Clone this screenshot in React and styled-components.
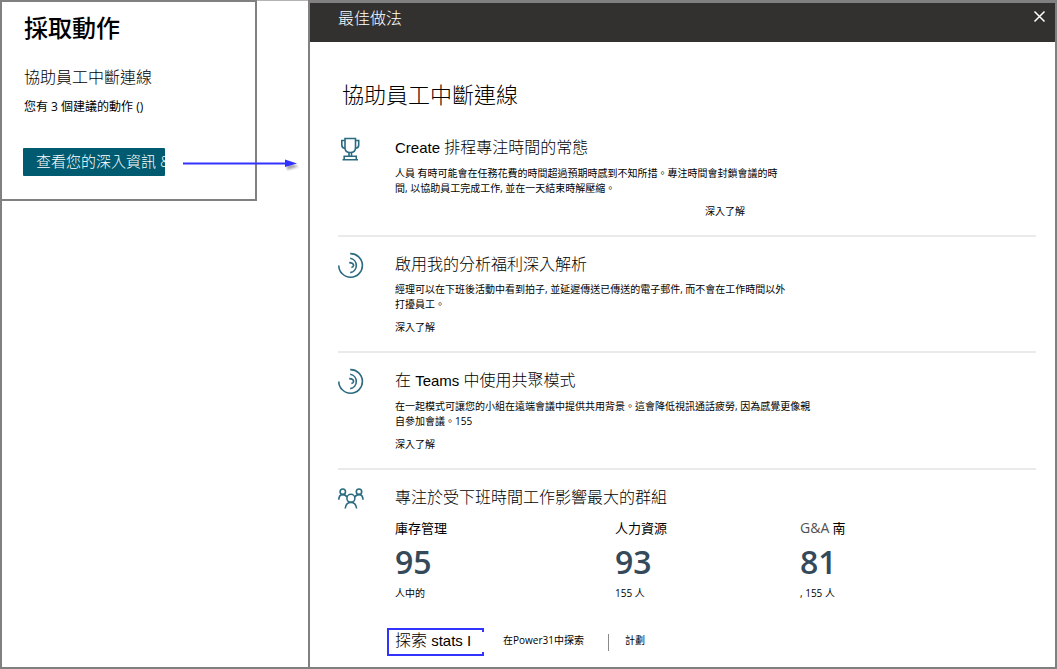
import React from 'react';
import styled, { createGlobalStyle } from 'styled-components';

const frame = '#808080';
const teal = '#2a6b80';
const blue = '#3333ff';

const GlobalStyle = createGlobalStyle`
  *, *::before, *::after { box-sizing: border-box; }
  body {
    margin: 0;
    background: #fff;
    color: #000;
    font-family: "Open Sans", "Noto Sans CJK TC", sans-serif;
  }
  h1, h2, h3, p { margin: 0; font-weight: 400; }
`;

const Page = styled.div`
  display: grid;
  grid-template-columns: minmax(308px, 29%) 1fr;
  min-height: 100vh;
`;

const Side = styled.aside`
  display: flex;
  align-items: flex-start;
  border-left: 2px solid ${frame};
  border-bottom: 2px solid ${frame};
`;

const SideEdge = styled.div`
  flex: 1;
  border-top: 1px solid #b4b4b4;
`;

const Card = styled.section`
  flex: 0 0 255px;
  min-width: 0;
  padding: 10px 0 23px 22px;
  border: 2px solid ${frame};
  border-left: 0;
`;

const CardTitle = styled.h1`
  font-size: 24px;
  line-height: 32px;
  font-weight: 500;
`;

const CardSubtitle = styled.h2`
  margin-top: 21px;
  font-size: 16px;
  line-height: 24px;
  font-weight: 300;
`;

const CardNote = styled.p`
  margin-top: 8px;
  font-size: 12px;
  line-height: 20px;
`;

const ActionRow = styled.div`
  display: flex;
  align-items: center;
  gap: 18px;
  margin: 31px 0 0 -1px;
`;

const InsightsButton = styled.button`
  flex: 0 0 142px;
  height: 28px;
  padding: 0 0 2px 13px;
  overflow: hidden;
  border: 0;
  border-radius: 1px;
  background: #005b70;
  color: #fff;
  font: 300 15px/24px "Open Sans", "Noto Sans CJK TC", sans-serif;
  text-align: left;
  white-space: nowrap;
`;

const Arrow = styled.svg`
  flex: none;
  display: block;
`;

const Panel = styled.main`
  display: flex;
  flex-direction: column;
  border: 2px solid ${frame};
  border-top-width: 3px;
`;

const PanelHeader = styled.header`
  display: flex;
  justify-content: space-between;
  align-items: flex-start;
  height: 39px;
  padding: 3px 9px 0 28px;
  background: #33312f;
  color: #fff;
`;

const PanelTitle = styled.h2`
  font-size: 16px;
  line-height: 24px;
  font-weight: 300;
`;

const CloseButton = styled.button`
  display: flex;
  padding: 4px 0;
  border: 0;
  background: none;
  color: #fff;
`;

const Content = styled.div`
  padding: 36px 19px 11px 28px;
`;

const Heading = styled.h1`
  padding-left: 4px;
  font-size: 22px;
  line-height: 32px;
  font-weight: 300;
  margin-bottom: 10px;
`;

const Practice = styled.section`
  display: grid;
  grid-template-columns: 26px 1fr;
  column-gap: 31px;
  padding: 15px 0 ${(p) => (p.$last ? 0 : 16)}px;
  border-bottom: ${(p) => (p.$last ? '0' : '2px solid #eaeaea')};
`;

const PracticeTitle = styled.h3`
  font-size: 16px;
  line-height: 24px;
  font-weight: 300;
`;

const Latin = styled.span`
  font-family: "Liberation Sans", sans-serif;
  font-size: 15px;
  font-weight: 400;
`;

const Description = styled.p`
  margin-top: 6px;
  font-family: "Open Sans", "Noto Sans CJK JP", sans-serif;
  font-size: 10px;
  line-height: 15px;
  white-space: nowrap;
`;

const LearnMore = styled.a`
  display: block;
  margin-top: 8px;
  padding-left: ${(p) => (p.$indented ? 310 : 0)}px;
  color: inherit;
  font-size: 10px;
  line-height: 15px;
  text-decoration: none;
`;

const Stats = styled.div`
  display: grid;
  grid-template-columns: 220px 185px 1fr;
  margin-top: 9px;
`;

const StatLabel = styled.p`
  font-size: 13px;
  line-height: 20px;
`;

const Muted = styled.span`
  color: #505050;
  font-size: 14px;
`;

const StatValue = styled.p`
  margin-top: 4px;
  color: #34495a;
  font-size: 32px;
  line-height: 40px;
  font-weight: 600;
`;

const StatNote = styled.p`
  margin-top: 4px;
  font-size: 10px;
  line-height: 15px;
`;

const Actions = styled.div`
  display: flex;
  align-items: center;
  margin: 27px 0 0 -8px;
`;

const ExploreButton = styled.button`
  position: relative;
  width: 97px;
  height: 28px;
  padding: 0 0 4px 6px;
  border: 2px solid ${blue};
  background: #fff;
  color: #000;
  font: 300 16px/20px "Open Sans", "Noto Sans CJK TC", sans-serif;
  text-align: left;
  white-space: nowrap;

  &::after {
    content: "";
    position: absolute;
    top: 2px;
    right: -2px;
    bottom: 2px;
    width: 2px;
    background: #fff;
  }
`;

const TextButton = styled.button`
  padding: 0 0 4px;
  border: 0;
  background: none;
  color: #000;
  font: 400 10px/15px "Open Sans", "Noto Sans CJK TC", sans-serif;
`;

const Separator = styled.span`
  width: 1px;
  height: 17px;
  margin: 0 16px 0 24px;
  background: #8a8a8a;
`;

const ActionGap = styled.span`
  width: 19px;
`;

const IconSvg = styled.svg`
  display: block;
  fill: none;
  stroke: ${teal};
  stroke-width: 1.6;
`;

const Icon = ({ children }) => (
  <IconSvg width="26" height="26" viewBox="0 0 26 26" aria-hidden="true">
    {children}
  </IconSvg>
);

const TrophyIcon = () => (
  <Icon>
    <path d="M7 3.5H17.5V13Q17.5 17.5 12.2 17.5Q7 17.5 7 13Z" />
    <path d="M7 5.5H3.8V10Q3.8 13 7 13.3M17.5 5.5H20.7V10Q20.7 13 17.5 13.3" />
    <path d="M11 17.5V21M13.5 17.5V21M6.2 24.8V21.3H18.3V24.8M4.5 24.8H20" />
  </Icon>
);

const SwirlIcon = () => (
  <Icon>
    <path d="M12.2 1.6A11.8 11.8 0 1 1 .8 13.4" />
    <path d="M12.2 6.2A7.3 7.3 0 0 1 12.2 20.6" />
    <path d="M11.2 10.6Q15.4 10.8 15.6 13.3Q15.4 15 13.4 15.6" />
  </Icon>
);

const PeopleIcon = () => (
  <Icon>
    <circle cx="4.8" cy="6.7" r="2.7" />
    <circle cx="21" cy="6.7" r="2.7" />
    <circle cx="12.9" cy="13.3" r="4" />
    <path d="M.8 14.8Q.8 9.6 4.8 9.6Q7.6 9.6 8.8 12M25 14.8Q25 9.6 21 9.6Q18.2 9.6 17 12" />
    <path d="M7.2 23.5Q8 17.4 12.9 17.4Q17.8 17.4 18.6 23.5" />
  </Icon>
);

const stats = [
  { label: '庫存管理', value: 95, note: '人中的' },
  { label: '人力資源', value: 93, note: '155 人' },
  { label: <><Muted>G&amp;A</Muted> 南</>, value: 81, note: ', 155 人' },
];

export default function App() {
  return (
    <>
      <GlobalStyle />
      <Page lang="zh-Hant">
        <Side>
          <Card>
            <CardTitle>採取動作</CardTitle>
            <CardSubtitle>協助員工中斷連線</CardSubtitle>
            <CardNote>您有 3 個建議的動作 ()</CardNote>
            <ActionRow>
              <InsightsButton type="button">查看您的深入資訊 &amp;</InsightsButton>
              <Arrow width="120" height="18" viewBox="0 0 120 18" aria-hidden="true">
                <defs>
                  <filter id="shadow" x="-10%" y="-50%" width="120%" height="220%">
                    <feDropShadow dx="2" dy="3" stdDeviation="1.2" floodColor="#000" floodOpacity=".35" />
                  </filter>
                </defs>
                <path d="M0 10.5H104" stroke={blue} strokeWidth="2" />
                <path d="M102 6.5L114 10.5L102 14Z" fill={blue} filter="url(#shadow)" />
              </Arrow>
            </ActionRow>
          </Card>
          <SideEdge />
        </Side>

        <Panel>
          <PanelHeader>
            <PanelTitle>最佳做法</PanelTitle>
            <CloseButton type="button" aria-label="關閉">
              <svg width="13" height="13" viewBox="0 0 13 13" stroke="currentColor" strokeWidth="1.5">
                <path d="M1.5 1.5L11.5 11.5M11.5 1.5L1.5 11.5" />
              </svg>
            </CloseButton>
          </PanelHeader>

          <Content>
            <Heading>協助員工中斷連線</Heading>

            <Practice>
              <TrophyIcon />
              <div>
                <PracticeTitle><Latin>Create</Latin> 排程專注時間的常態</PracticeTitle>
                <Description>
                  人員 有時可能會在任務花費的時間超過預期時感到不知所措。專注時間會封鎖會議的時<br />
                  間, 以協助員工完成工作, 並在一天結束時解壓縮。
                </Description>
                <LearnMore href="#focus" $indented>深入了解</LearnMore>
              </div>
            </Practice>

            <Practice>
              <SwirlIcon />
              <div>
                <PracticeTitle>啟用我的分析福利深入解析</PracticeTitle>
                <Description>
                  經理可以在下班後活動中看到拍子, 並延遲傳送已傳送的電子郵件, 而不會在工作時間以外<br />
                  打擾員工。
                </Description>
                <LearnMore href="#insights">深入了解</LearnMore>
              </div>
            </Practice>

            <Practice>
              <SwirlIcon />
              <div>
                <PracticeTitle>在 <Latin>Teams</Latin> 中使用共聚模式</PracticeTitle>
                <Description>
                  在一起模式可讓您的小組在遠端會議中提供共用背景。這會降低視訊通話疲勞, 因為感覺更像親<br />
                  自參加會議。155
                </Description>
                <LearnMore href="#together">深入了解</LearnMore>
              </div>
            </Practice>

            <Practice $last>
              <PeopleIcon />
              <div>
                <PracticeTitle>專注於受下班時間工作影響最大的群組</PracticeTitle>
                <Stats>
                  {stats.map((s) => (
                    <div key={s.value}>
                      <StatLabel>{s.label}</StatLabel>
                      <StatValue>{s.value}</StatValue>
                      <StatNote>{s.note}</StatNote>
                    </div>
                  ))}
                </Stats>
                <Actions>
                  <ExploreButton type="button">探索 <Latin>stats I</Latin></ExploreButton>
                  <ActionGap />
                  <TextButton type="button">在Power31中探索</TextButton>
                  <Separator />
                  <TextButton type="button">計劃</TextButton>
                </Actions>
              </div>
            </Practice>
          </Content>
        </Panel>
      </Page>
    </>
  );
}
